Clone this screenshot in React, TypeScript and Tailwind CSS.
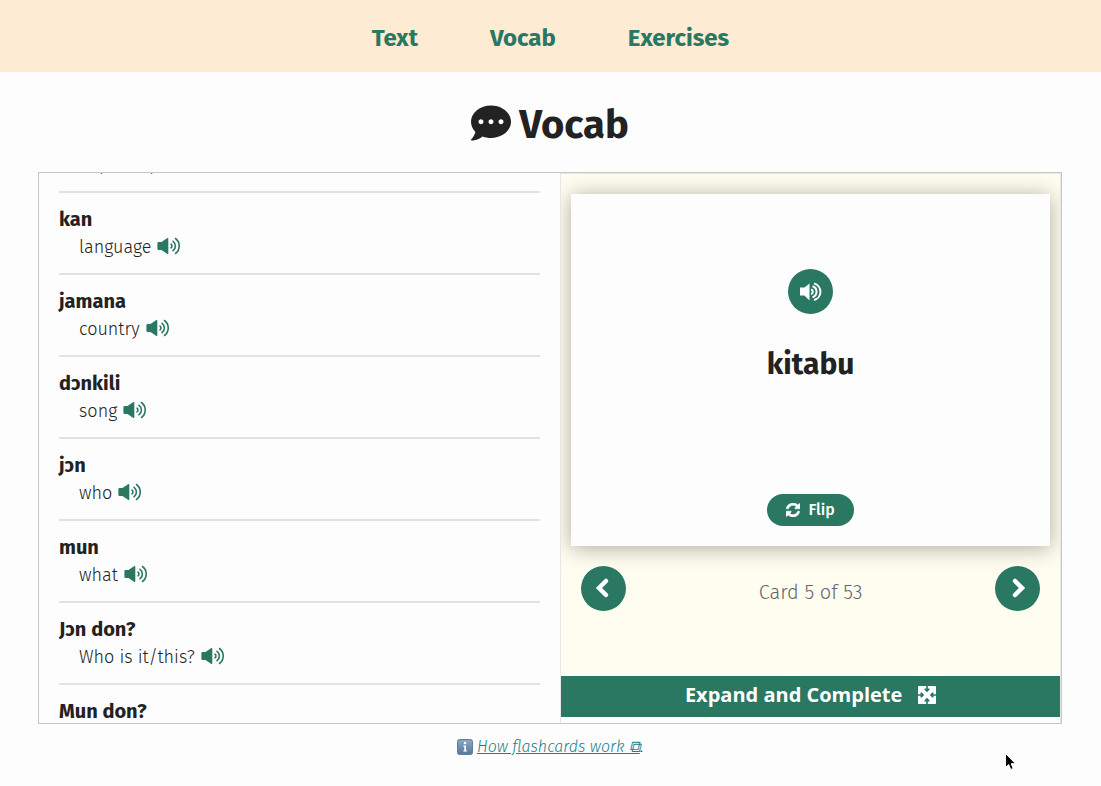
import React, { useLayoutEffect, useRef } from "react";
import { FaCommentDots } from "react-icons/fa";

const words = [
  { id: 1, term: "katuguni", meaning: "for, since, as" },
  { id: 2, term: "kan", meaning: "language" },
  { id: 3, term: "jamana", meaning: "country" },
  { id: 4, term: "dɔnkili", meaning: "song" },
  { id: 5, term: "jɔn", meaning: "who" },
  { id: 6, term: "mun", meaning: "what" },
  { id: 7, term: "Jɔn don?", meaning: "Who is it/this?" },
  { id: 8, term: "Mun don?", meaning: "What is it/this?" },
];

const VolumeIcon = () => (
  <svg viewBox="0 0 24 18" className="w-6 h-[18px]" aria-hidden="true">
    <path
      d="M1.500 5h3L10 1.300q1.300-.7 1.300.5v14.400q0 1.200-1.300.5L4.500 13h-3Q.4 13 .4 11.800V6.200Q.4 5 1.500 5z"
      fill="currentColor"
    />
    <g fill="none" stroke="currentColor" strokeWidth="1.600" strokeLinecap="round">
      <path d="M14 7.200a2.200 2.200 0 0 1 0 3.600" />
      <path d="M16 4.300a5.800 5.800 0 0 1 0 9.400" />
      <path d="M18.500 1.500a9.400 9.400 0 0 1 0 15" />
    </g>
  </svg>
);

const SpeakerIcon = () => (
  <svg viewBox="0 0 22 20" className="w-[22px] h-5" aria-hidden="true">
    <path d="M0 5.500h4.500L9.500 1.500v16.500h-.5l-4.500-4.500H0z" fill="currentColor" />
    <g fill="none" stroke="currentColor" strokeWidth="2">
      <path d="M11 7.500a2.300 2.300 0 0 1 0 4.500" />
      <path d="M12.500 4.300a5.700 5.700 0 0 1 0 10.900" />
      <path d="M14 1.500a8.500 8.500 0 0 1 0 16.500" />
    </g>
  </svg>
);

const RefreshIcon = () => (
  <svg viewBox="128 128 1536 1536" className="w-3.5 h-3.5" fill="currentColor" stroke="currentColor" strokeWidth="60" aria-hidden="true">
    <path d="M1639 1056q0 5-1 7-64 268-268 434.500t-478 166.500q-146 0-282.500-55t-243.500-157l-129 129q-19 19-45 19t-45-19-19-45v-448q0-26 19-45t45-19h448q26 0 45 19t19 45-19 45l-137 137q71 66 161 102t187 36q134 0 250-65t186-179q11-17 53-117 8-23 30-23h192q13 0 22.500 9.500t9.500 22.500zm25-800v448q0 26-19 45t-45 19h-448q-26 0-45-19t-19-45 19-45l138-138q-148-137-349-137-134 0-250 65t-186 179q-11 17-53 117-8 23-30 23h-199q-13 0-22.500-9.500t-9.500-22.500v-7q65-268 270-434.500t480-166.500q146 0 284 55.500t245 156.500l130-129q19-19 45-19t45 19 19 45z" />
  </svg>
);

const ExpandIcon = () => (
  <svg viewBox="0 0 18 18" className="w-[18px] h-[18px]" aria-hidden="true">
    <rect width="18" height="18" rx="1" fill="currentColor" />
    <g fill="#2a7762">
      <path d="M8.200 0h1.600v2.500h1.700v1.300L9 6.200 6.500 3.800V2.500h1.700z" />
      <path d="M8.200 18h1.600v-2.500h1.700v-1.300L9 11.800l-2.500 2.400v1.300h1.700z" />
      <path d="M0 8.200v1.600h2.500v1.700h1.300L6.200 9 3.800 6.500H2.500v1.700z" />
      <path d="M18 8.200v1.600h-2.500v1.700h-1.300L11.800 9l2.400-2.500h1.300v1.700z" />
    </g>
  </svg>
);

const Chevron = ({ d }: { d: string }) => (
  <svg
    viewBox="0 0 14 20"
    className="w-3.5 h-5 overflow-visible"
    fill="none"
    stroke="currentColor"
    strokeWidth="4.500"
    strokeLinecap="round"
    aria-hidden="true"
  >
    <path d={d} />
  </svg>
);

const InfoIcon = () => (
  <svg viewBox="0 0 16 16" className="w-4 h-4" aria-hidden="true">
    <defs>
      <linearGradient id="info" x1="0" y1="0" x2="0" y2="1">
        <stop offset="0" stopColor="#8ba9c4" />
        <stop offset="1" stopColor="#54779b" />
      </linearGradient>
    </defs>
    <rect x=".5" y=".5" width="15" height="15" rx="2" fill="url(#info)" stroke="#5f7f9f" />
    <circle cx="8" cy="4" r="1.300" fill="#fff" />
    <path d="M6.300 6.500h2.700v5h1v1H6.300v-1h1v-4h-1z" fill="#fff" />
  </svg>
);

const WordList = () => {
  const listRef = useRef<HTMLDivElement>(null);

  useLayoutEffect(() => {
    if (listRef.current) listRef.current.scrollTop = 62;
  }, []);

  return (
    <div ref={listRef} className="flex-1 min-w-0 h-[550px] overflow-y-auto px-5 [scrollbar-width:none]">
      {words.map((word) => (
        <div key={word.id} className="py-3 border-b-2 border-[#e2e2e2]">
          <h3 className="text-xl leading-7 font-bold">{word.term}</h3>
          <p className="pl-5 text-lg leading-7 font-light flex items-center gap-1.5">
            {word.meaning}
            <button aria-label={`Listen to ${word.term}`} className="pb-0.5 text-[#2a7762]">
              <VolumeIcon />
            </button>
          </p>
        </div>
      ))}
    </div>
  );
};

const roundBtn =
  "w-[45px] h-[45px] rounded-full bg-[#2a7762] text-white flex items-center justify-center";

const Flashcards = () => (
  <div className="w-[49%] h-[550px] flex flex-col border-x border-t border-[#e6e6e6] overflow-hidden">
    <div className="h-[500px] bg-[#fffdf0] px-2.5 pt-5">
      <div className="h-[352px] bg-[#fdfdfd] shadow-[0_2px_20px_rgba(50,50,20,0.4)] flex flex-col items-center pt-[75px] pb-5">
        <button aria-label="Listen" className={roundBtn}>
          <SpeakerIcon />
        </button>
        <h2 className="mt-[29px] text-3xl leading-[42px] font-bold">kitabu</h2>
        <button className="mt-auto h-8 px-[19px] rounded-full bg-[#2a7762] text-white flex items-center gap-2 text-base font-medium">
          <RefreshIcon />
          Flip
        </button>
      </div>
      <div className="mt-5 px-2.5 flex items-center justify-between">
        <button aria-label="Previous card" className={roundBtn}>
          <Chevron d="M9 2L2 9l7 7" />
        </button>
        <p className="pt-1.5 text-xl leading-7 font-light text-[#666]">Card 5 of 53</p>
        <button aria-label="Next card" className={roundBtn}>
          <Chevron d="M5 2l7 7-7 7" />
        </button>
      </div>
    </div>
    <button className="mt-0.5 h-[41px] pb-1 bg-[#2a7762] text-white font-['Open_Sans',sans-serif] text-xl font-bold flex items-center justify-center gap-4">
      Expand and Complete
      <ExpandIcon />
    </button>
  </div>
);

const App = () => {
  return (
    <div className="min-h-screen bg-[#fdfdfd] text-[#222] font-['Fira_Sans','Open_Sans',sans-serif]">
      <nav className="h-[72px] pt-1 bg-[#fdebd3] flex items-center justify-center gap-[72px] text-2xl font-bold text-[#2a7762]">
        <a href="#text">Text</a>
        <a href="#vocab">Vocab</a>
        <a href="#exercises">Exercises</a>
      </nav>

      <main className="max-w-[1065px] mx-auto pl-5 pr-[21px]">
        <h1 className="h-[100px] pt-1.5 flex items-center justify-center gap-2 text-[40px] font-bold">
          <FaCommentDots className="w-10 h-10 mb-1" />
          Vocab
        </h1>

        <section className="flex border border-[#c8c8c8]">
          <WordList />
          <Flashcards />
        </section>

        <p className="mt-[9px] leading-7 text-base font-light flex items-center justify-center">
          <InfoIcon />
          <a href="#help" className="ml-1 italic underline text-[#1b7f8c]">
            How flashcards work ⧉
          </a>
          .
        </p>
      </main>

      {/* Pointer */}
      <svg viewBox="0 0 13 19" className="absolute left-[1004px] top-[752px] w-[13px] h-[19px]" aria-hidden="true">
        <path
          d="M1.500 1.500v14l3.200-3 2 5 2.500-1-2-4.800h4.300z"
          fill="#000"
          stroke="#fff"
          strokeWidth="1"
        />
      </svg>
    </div>
  );
};

export default App;
